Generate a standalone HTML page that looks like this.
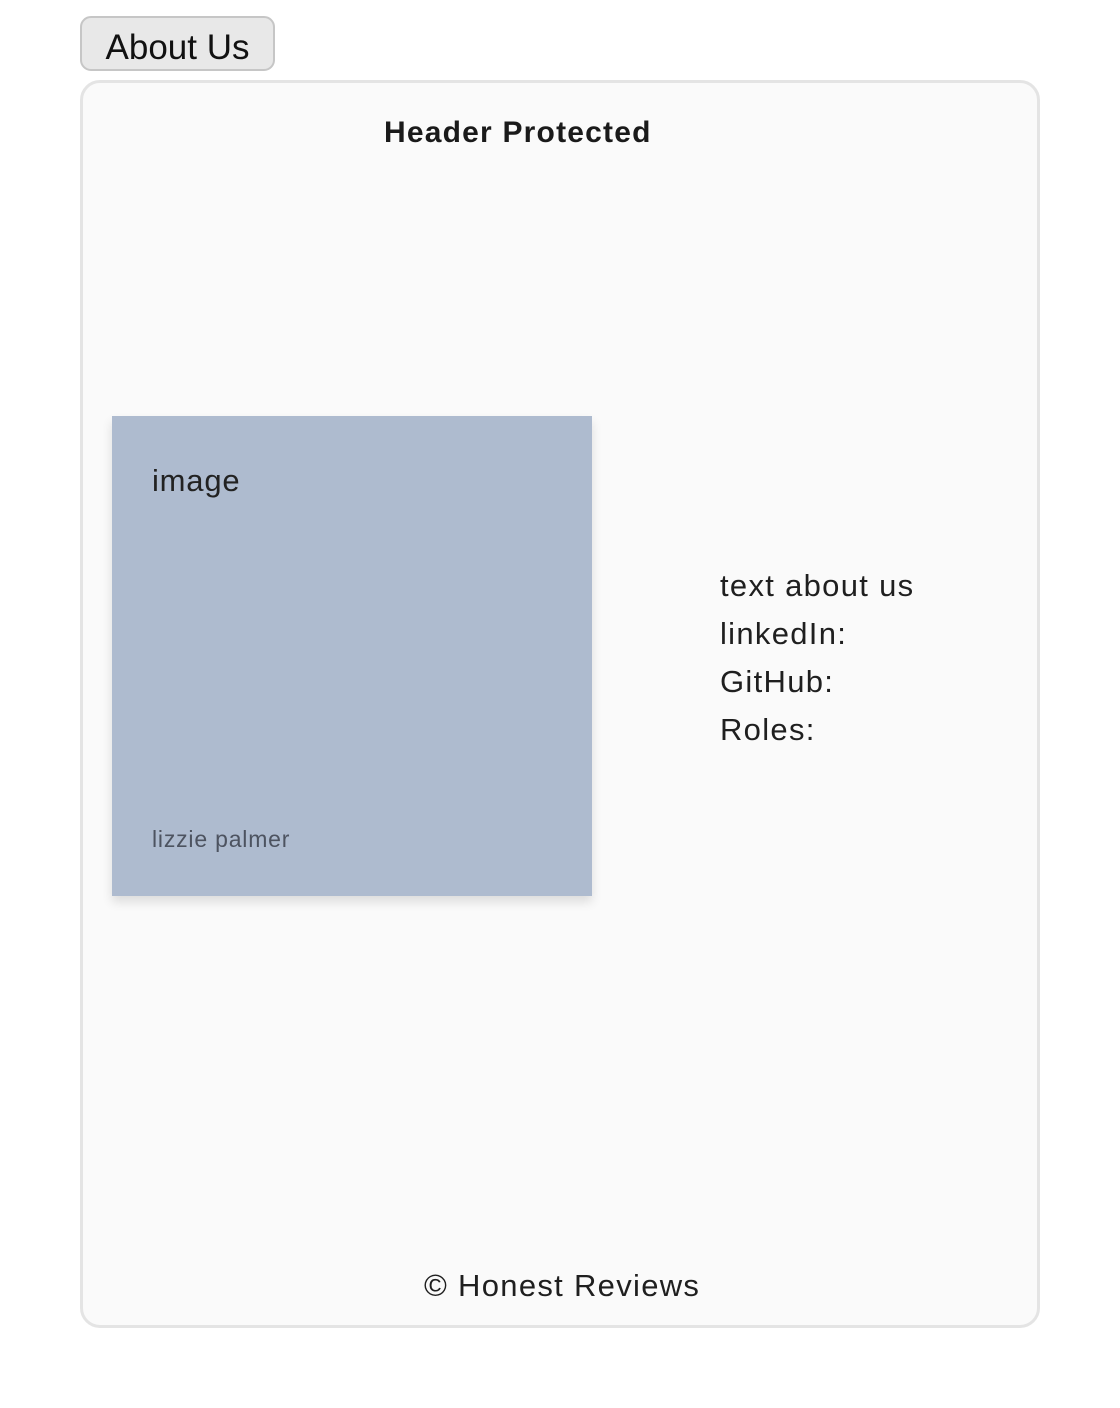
<!DOCTYPE html>
<html><head><meta charset="utf-8"><style>
body{margin:0;background:#fff;font-family:"Liberation Sans",sans-serif;color:#1f1f1f;width:1120px;height:1408px;position:relative;overflow:hidden}
.btn{position:absolute;left:80px;top:16px;width:191px;height:51px;background:#e8e8e8;border:2px solid #c6c6c6;border-radius:11px;font-size:35px;color:#111;line-height:59px;text-align:center}
.card{position:absolute;left:80px;top:80px;width:954px;height:1242px;border:3px solid #e4e4e4;border-radius:20px;background:#fafafa}
.h{position:absolute;left:384px;top:116px;font-size:30px;font-weight:bold;color:#1a1a1a;letter-spacing:1.2px}
.img{position:absolute;left:112px;top:416px;width:480px;height:480px;background:#aebbcf;box-shadow:0 6px 10px rgba(0,0,0,.12)}
.img .t{position:absolute;left:40px;top:47px;font-size:31px;color:#222;letter-spacing:.8px}
.img .n{position:absolute;left:40px;top:410px;font-size:23px;color:#4d5360;letter-spacing:.8px}
.txt{position:absolute;left:720px;top:562px;font-size:31px;line-height:48px;color:#1f1f1f;letter-spacing:1.3px}
.f{position:absolute;left:424px;top:1268px;font-size:31px;color:#1f1f1f;letter-spacing:1.3px}
</style></head><body>
<div class="btn">About Us</div>
<div class="card"></div>
<div class="h">Header Protected</div>
<div class="img"><div class="t">image</div><div class="n">lizzie palmer</div></div>
<div class="txt">text about us<br>linkedIn:<br>GitHub:<br>Roles:</div>
<div class="f">© Honest Reviews</div>
</body></html>
